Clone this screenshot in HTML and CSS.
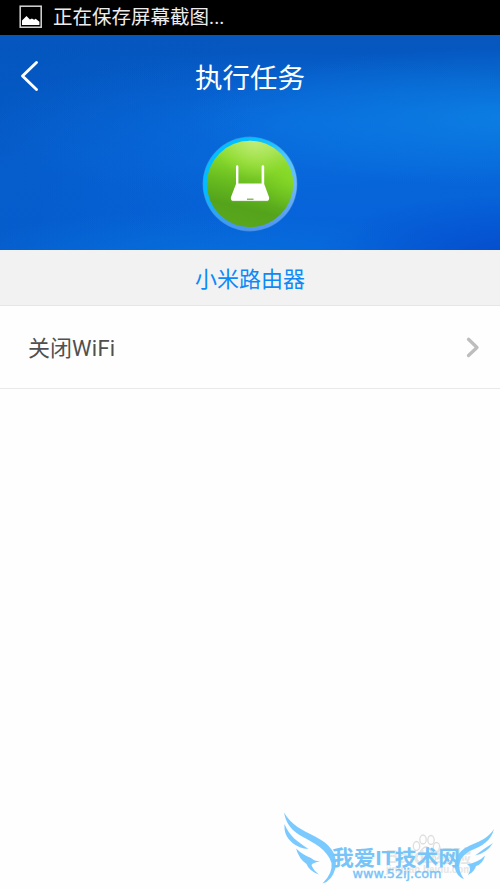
FILE: index.html
```html
<!DOCTYPE html>
<html lang="zh-CN">
<head>
<meta charset="utf-8">
<title>执行任务</title>
<link rel="stylesheet" href="styles.css">
</head>
<body>
<div class="status">
  <svg class="status-icon" width="24" height="24" viewBox="0 0 24 24"><rect x="1.2" y="1.2" width="21" height="21" fill="none" stroke="#d8d8d8" stroke-width="1.5"/><path d="M3 20v-4.600L7.500 11l3.400 3.600 2-1.200 2.200 1.400 1.600-1 3.700 3v3.200z" fill="#fff"/></svg>
  <span class="status-text">正在保存屏幕截图...</span>
</div>
<header class="hero">
  <div class="nav">
    <svg class="back" width="20" height="32" viewBox="0 0 20 32"><path d="M16.500 2.500 2.500 16l14 13.500" fill="none" stroke="#fff" stroke-width="2.900" stroke-linecap="round" stroke-linejoin="round"/></svg>
    <h1 class="title">执行任务</h1>
  </div>
  <svg class="device" width="96" height="96" viewBox="0 0 96 96">
    <defs>
      <linearGradient id="ringRight" x1="0" y1="0" x2="0" y2="1"><stop offset="0" stop-color="#00c0ff"/><stop offset=".2" stop-color="#4cc8ff"/><stop offset=".5" stop-color="#70b9fb"/><stop offset="1" stop-color="#4e93f3"/></linearGradient>
      <linearGradient id="ringLeft" x1="0" y1="0" x2="0" y2="1"><stop offset="0" stop-color="#00c0ff"/><stop offset=".6" stop-color="#04b9ff"/><stop offset="1" stop-color="#4e93f3"/></linearGradient>
      <linearGradient id="green" x1=".62" y1="0" x2=".38" y2="1"><stop offset="0" stop-color="#aae65a"/><stop offset=".27" stop-color="#89d92b"/><stop offset=".52" stop-color="#69bd20"/><stop offset=".78" stop-color="#54a31b"/><stop offset="1" stop-color="#5aa71c"/></linearGradient>
      <radialGradient id="shine" cx=".55" cy="0" r=".45"><stop offset="0" stop-color="#d0f08c" stop-opacity=".65"/><stop offset="1" stop-color="#b8ea60" stop-opacity="0"/></radialGradient>
      <radialGradient id="lime" cx="1" cy=".42" r=".4"><stop offset="0" stop-color="#88dc28" stop-opacity=".7"/><stop offset="1" stop-color="#80d020" stop-opacity="0"/></radialGradient>
    </defs>
    <circle cx="48" cy="48" r="47.400" fill="#3b8bd5"/>
    <path d="M48 1.200a46.800 46.800 0 0 0 0 93.600z" fill="url(#ringLeft)"/>
    <path d="M47.800 1.200H48a46.800 46.800 0 0 1 0 93.600h-.2z" fill="url(#ringRight)"/>
    <circle cx="48" cy="48" r="43.200" fill="url(#green)"/>
    <circle cx="48" cy="48" r="43.200" fill="url(#lime)"/>
    <circle cx="48" cy="48" r="43.200" fill="url(#shine)"/>
    <path d="M34 30.500q0-1.200 1.200-1.200t1.200 1.200v17h23.200v-17q0-1.200 1.300-1.200t1.300 1.200V48L67 61q.8 4-2 4H31q-2.800 0-2-4l5-13z" fill="#fff"/>
    <path d="M30 64.600h36" stroke="#dcebd0" stroke-width=".8"/>
    <path d="M45 63.200h6.500" stroke="#67ac38" stroke-width="1.200"/>
  </svg>
</header>
<div class="name">小米路由器</div>
<div class="row">
  <span class="row-label">关闭<span class="latin">WiFi</span></span>
  <svg class="chevron" width="14" height="22" viewBox="0 0 14 22"><path d="M2.500 3.300 11 11.500l-8.500 8" fill="none" stroke="#bdbdbd" stroke-width="3.300" stroke-linecap="round" stroke-linejoin="round"/></svg>
</div>
<svg class="watermark" width="220" height="89" viewBox="280 800 220 89">
  <g fill="none" stroke="#dedede" stroke-width="1.300">
    <ellipse cx="416.500" cy="846" rx="3.200" ry="4.500"/><ellipse cx="423" cy="839.500" rx="3.200" ry="4.500"/><ellipse cx="431" cy="840" rx="3.200" ry="4.500"/><ellipse cx="436.500" cy="847" rx="3.200" ry="4.500"/><path d="M426 847c-4 0-5 5-8 8s-1 7 3 7h10c5 0 6-4 3-7s-4-8-8-8z"/>
  </g>
  <g class="faint"><text x="386" y="863" font-size="18" textLength="85" lengthAdjust="spacingAndGlyphs">Baidu经验</text><text x="386" y="873" font-size="11" textLength="86" lengthAdjust="spacingAndGlyphs">jingyan.baidu.com</text></g>
  <g fill="#7bcaff">
    <path d="M284 812.500C291 825 302 830 315 836.500C330 844 338 854 335.500 868Q332 881 322.500 883.500Q333 873 331.500 863C327 849 314 843 303 837C292 831 286 824 284 812.500z"/>
    <path d="M284.500 824C290 837 297 841 308.500 849Q299 848.500 292.500 843C286 837 284 832 284.500 824z"/>
    <path d="M296 848.500Q303 855 311 858Q314 861 320 861.500Q313 862.500 311.500 865Q313 870 319 874.500Q309 871 306.500 864Q299 859 296 848.500z"/>
    <path d="M494 829C491 841 482 846 471 850.500C460 856 455 866 464 879C453 875 452 860 460 852.500C468 843 484 844 494 829z"/>
    <path d="M493 843Q487 853 475 855.500Q485 848 493 843z"/>
    <path d="M485 855.500Q483 864 476 866Q475 871 468 875Q473 867 467 864.500Q479 862 485 855.500z"/>
  </g>
  <g class="brand"><text x="332" y="865" font-size="21" textLength="128" lengthAdjust="spacingAndGlyphs">我爱IT技术网</text><text class="domain" x="352.500" y="878" font-size="12.500" textLength="89" lengthAdjust="spacingAndGlyphs">www.52ij.com</text></g>
</svg>
</body>
</html>
```
FILE: styles.css
```css
* { box-sizing: border-box; }
body {
  margin: 0;
  width: 500px;
  height: 889px;
  overflow: hidden;
  position: relative;
  background: #fefefe;
  font-family: Roboto, "Noto Sans CJK SC", sans-serif;
}
svg { display: block; flex: none; }
.status {
  height: 35px;
  padding: 0 0 2px 19px;
  display: flex;
  align-items: center;
  gap: 10px;
  background: #000;
  color: #ededed;
  font-size: 19.500px;
  line-height: 28px;
}
.status-text { padding-top: 3px; }
.hero {
  height: 215px;
  background:
    radial-gradient(ellipse 340px 70px at 105% 38%, rgba(14, 139, 235, .7), rgba(14, 139, 235, 0)),
    radial-gradient(ellipse 210px 65px at 105% 104%, rgba(4, 62, 198, .65), rgba(4, 62, 198, 0)),
    radial-gradient(ellipse 260px 50px at 42% 105%, rgba(8, 116, 222, .7), rgba(8, 116, 222, 0)),
    radial-gradient(ellipse 300px 75px at 58% 42%, rgba(10, 114, 228, .6), rgba(10, 114, 228, 0)),
    linear-gradient(90deg, rgba(4, 86, 190, .5), rgba(4, 86, 190, 0) 55%),
    linear-gradient(180deg, #0656bd, #055bc9 30%, #0764d8 60%, #0663da);
}
.nav {
  height: 102px;
  padding: 0 20px 20px;
  display: grid;
  grid-template-columns: 20px 1fr 20px;
  align-items: center;
}
.title {
  margin: 6px 0 0;
  text-align: center;
  font-size: 27.500px;
  line-height: 36px;
  font-weight: 400;
  color: #fff;
}
.device { margin: -1px auto 0; }
.name {
  height: 56px;
  border-bottom: 1px solid #e6e6e6;
  background: #f2f2f2;
  color: #0d8af8;
  font-size: 22px;
  line-height: 59px;
  text-align: center;
}
.row {
  height: 83px;
  padding: 0 20px 0 28px;
  display: flex;
  align-items: center;
  justify-content: space-between;
  border-bottom: 1px solid #e9e9e9;
  font-size: 22px;
  color: #505050;
}
.row-label { padding-bottom: 3px; }
.latin { letter-spacing: .25px; }
.watermark { position: absolute; right: 0; bottom: 0; }
.faint { fill: #e6e6e6; font-family: "Liberation Sans", "Noto Sans CJK SC", sans-serif; font-weight: 700; }
.brand { fill: #76c4f8; font-family: "Liberation Sans", "Noto Sans CJK SC", sans-serif; font-weight: 700; }
.domain { font-family: "DejaVu Sans", sans-serif; font-weight: 400; stroke: #76c4f8; stroke-width: .4px; }
```
